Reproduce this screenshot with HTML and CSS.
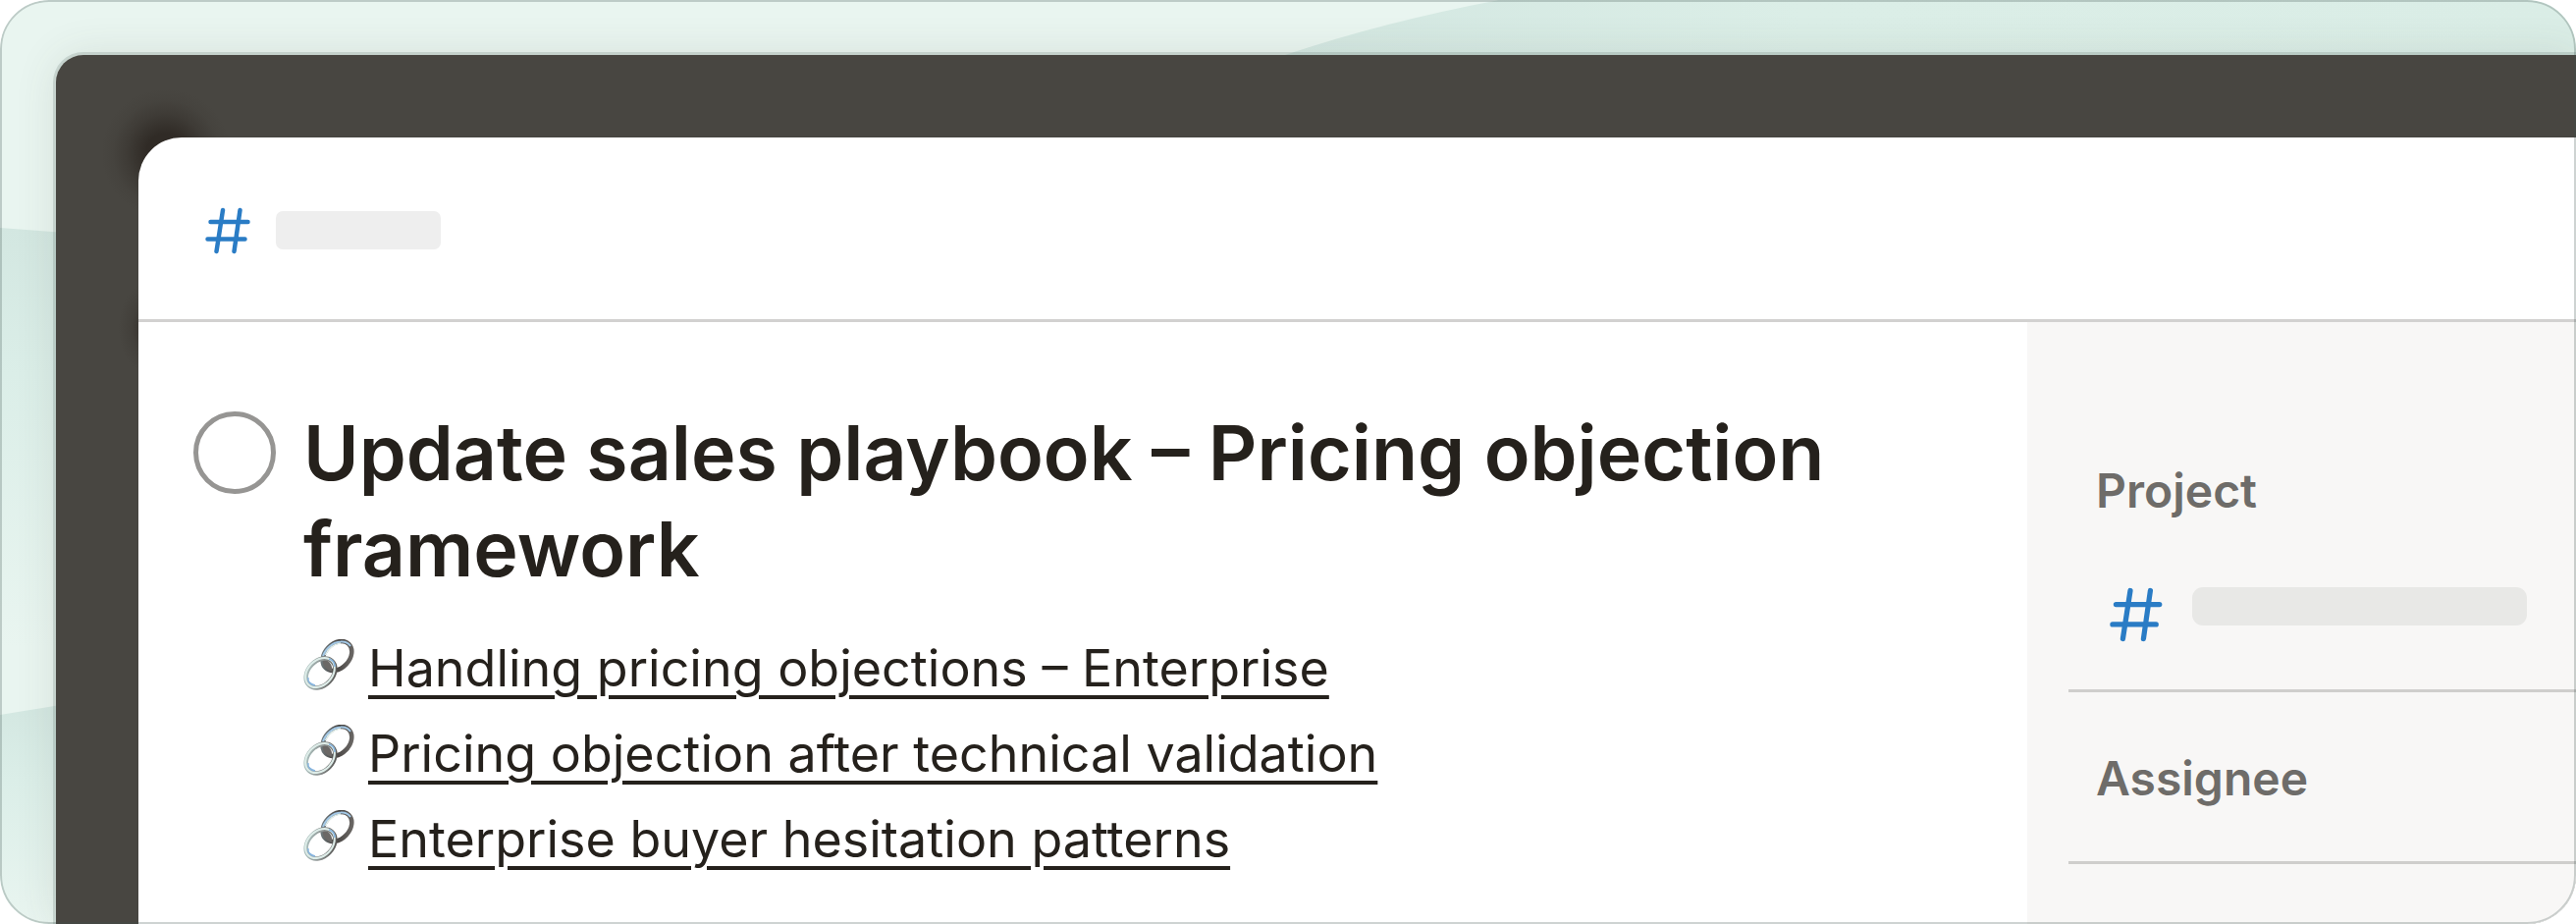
FILE: index.html
```html
<!DOCTYPE html>
<html lang="en">
<head>
<meta charset="utf-8">
<meta name="viewport" content="width=device-width, initial-scale=1">
<title>Update sales playbook – Pricing objection framework</title>
<link rel="stylesheet" href="styles.css">
</head>
<body>
<svg width="0" height="0" class="sprite" aria-hidden="true">
  <defs>
    <linearGradient id="metal" x1="0" y1="0" x2="1" y2="1">
      <stop offset="0" stop-color="#b4ccca"/>
      <stop offset=".5" stop-color="#8f9594"/>
      <stop offset="1" stop-color="#4a4846"/>
    </linearGradient>
    <linearGradient id="steel" x1="0" y1="0" x2="1" y2="1">
      <stop offset="0" stop-color="#7c8a8f"/>
      <stop offset=".5" stop-color="#454240"/>
      <stop offset="1" stop-color="#75726f"/>
    </linearGradient>
    <symbol id="hash" viewBox="0 0 48 48">
      <path d="M18 3 11.500 45M35.500 3 29.500 45M5.500 15H43.500M2.500 32.500H40.500" fill="none" stroke="#2a7cc5" stroke-width="4.500" stroke-linecap="round"/>
    </symbol>
    <symbol id="chain" viewBox="0 0 52 52">
      <g fill="none">
        <ellipse cx="34.500" cy="17" rx="17" ry="12.500" transform="rotate(-46 34.500 17)" stroke="url(#steel)" stroke-width="4.500"/>
        <path d="M20 17C23 9 30 3 38 2.500C43 2 46 4 48 7" stroke="#a3c8e6" stroke-width="2"/>
        <path d="M22.500 16C25.500 9 31.500 5 38 4" stroke="#e3f0ec" stroke-width="1.500"/>
        <path d="M20 20C19 27 23 31 29 33C30 27 27 21 20 20Z" fill="#6b6866"/>
        <ellipse cx="17.500" cy="34.500" rx="17" ry="12.500" transform="rotate(-46 17.500 34.500)" stroke="url(#metal)" stroke-width="4.500"/>
        <ellipse cx="17" cy="34" rx="17" ry="12.500" transform="rotate(-46 17 34)" stroke="#deede9" stroke-width="2"/>
        <path d="M5 39C4 43 7 46 12 47" stroke="#86b4df" stroke-width="1.500"/>
        <path d="M26 20C30 21 32 24 32 28" stroke="#86b4df" stroke-width="1.500"/>
      </g>
    </symbol>
  </defs>
</svg>
<div class="stage">
  <svg class="backdrop" viewBox="0 0 2624 941" preserveAspectRatio="none" aria-hidden="true">
    <defs>
      <linearGradient id="band" x1="0" y1="0" x2="0" y2="1">
        <stop offset="0" stop-color="#d3e7e1"/>
        <stop offset=".35" stop-color="#dbeee8"/>
        <stop offset="1" stop-color="#e9f5f0"/>
      </linearGradient>
      <linearGradient id="sweep" x1="0" y1="0" x2="1" y2="0">
        <stop offset="0" stop-color="#d3e7e1"/>
        <stop offset=".4" stop-color="#dbeee7"/>
        <stop offset="1" stop-color="#daede6"/>
      </linearGradient>
    </defs>
    <rect width="2624" height="941" fill="#e9f5f0"/>
    <path d="M0 232 80 238V660H0Z" fill="url(#band)"/>
    <path d="M0 728 80 715V941H0Z" fill="url(#band)"/>
    <path d="M1527 0Q1410 22 1309 56V80H2624V0Z" fill="url(#sweep)"/>
  </svg>
  <div class="frame">
    <article class="card">
      <header class="card-header">
        <svg class="hash" aria-hidden="true"><use href="#hash"/></svg>
        <span class="placeholder"></span>
      </header>
      <div class="card-body">
        <main class="task">
          <input class="task-check" type="checkbox" id="done" aria-labelledby="task-title">
          <div class="task-content">
            <h1 class="task-title" id="task-title">Update sales playbook – Pricing objection framework</h1>
            <ul class="links">
              <li class="link-row"><svg class="chain" aria-hidden="true"><use href="#chain"/></svg><a href="#handling">Handling pricing objections – Enterprise</a></li>
              <li class="link-row"><svg class="chain" aria-hidden="true"><use href="#chain"/></svg><a href="#validation">Pricing objection after technical validation</a></li>
              <li class="link-row"><svg class="chain" aria-hidden="true"><use href="#chain"/></svg><a href="#hesitation">Enterprise buyer hesitation patterns</a></li>
            </ul>
          </div>
        </main>
        <aside class="sidebar">
          <section class="field field-project">
            <h2 class="field-label">Project</h2>
            <div class="field-value">
              <svg class="hash hash-large" aria-hidden="true"><use href="#hash"/></svg>
              <span class="placeholder placeholder-wide"></span>
            </div>
          </section>
          <section class="field">
            <h2 class="field-label">Assignee</h2>
          </section>
        </aside>
      </div>
    </article>
  </div>
</div>
</body>
</html>
```
FILE: styles.css
```css
* {
  box-sizing: border-box;
}

body {
  margin: 0;
  background: #fff;
  color: #25211c;
  font-family: Inter, "Liberation Sans", sans-serif;
  font-optical-sizing: none;
}

.sprite {
  position: absolute;
}

.stage {
  position: relative;
  display: flex;
  min-height: 100vh;
  padding: 56px 0 0 57px;
  border-radius: 50px;
  overflow: hidden;
}

/* hairline drawn above the content that bleeds off the edges */
.stage::after {
  content: "";
  position: absolute;
  inset: 0;
  border: 2px solid rgba(60, 80, 75, 0.25);
  border-radius: 50px;
  pointer-events: none;
}

.backdrop {
  position: absolute;
  inset: 0;
  width: 100%;
  height: 100%;
}

.frame {
  position: relative;
  display: flex;
  flex: 1;
  padding: 84px 0 0 84px;
  border-top-left-radius: 28px;
  background:
    radial-gradient(circle at 112px 100px, #302b26 0, #302b26 20px, rgba(48, 43, 38, 0.4) 40px, rgba(48, 43, 38, 0.1) 54px, rgba(48, 43, 38, 0) 66px),
    radial-gradient(ellipse 26px 44px at 90px 278px, rgba(53, 49, 44, 0.9) 0, rgba(53, 49, 44, 0.3) 50%, rgba(53, 49, 44, 0) 100%),
    #484641;
  box-shadow: 0 0 0 3px rgba(90, 110, 105, 0.2), 0 0 44px rgba(70, 70, 60, 0.12);
}

.card {
  display: flex;
  flex: 1;
  flex-direction: column;
  border-top-left-radius: 44px;
  background: #fff;
  overflow: hidden;
}

.card-header {
  display: flex;
  align-items: center;
  gap: 24px;
  height: 188px;
  padding: 4px 0 0 68px;
  border-bottom: 3px solid #d2d1d0;
}

.hash {
  width: 48px;
  height: 48px;
}

.hash-large {
  width: 56px;
  height: 56px;
}

.placeholder {
  width: 168px;
  height: 39px;
  border-radius: 7px;
  background: #eeeeee;
}

.placeholder-wide {
  width: 341px;
  border-radius: 11px;
  background: #e8e8e6;
}

.card-body {
  display: grid;
  flex: 1;
  grid-template-columns: minmax(0, 1fr) 559px;
}

.task {
  display: flex;
  align-items: flex-start;
  gap: 28px;
  padding: 84px 56px 0;
}

.task-check {
  flex: none;
  width: 84px;
  height: 84px;
  margin: 7px 0 0;
  border: 5px solid #969593;
  border-radius: 50%;
  appearance: none;
}

.task-check:checked {
  background: #969593;
}

.task-title {
  max-width: 1660px;
  margin: 0;
  font-size: 77px;
  font-weight: 600;
  line-height: 98px;
}

.links {
  margin: 29px 0 0;
  padding: 0;
  list-style: none;
}

.link-row {
  display: flex;
  align-items: center;
  gap: 14px;
  font-size: 52px;
  line-height: 87px;
}

.link-row a {
  color: inherit;
  text-decoration: underline;
  text-decoration-thickness: 4px;
  text-underline-offset: 9px;
}

.chain {
  width: 52px;
  height: 52px;
  margin-bottom: 8px;
}

.sidebar {
  padding: 144px 0 0 42px;
  background: #f8f7f6;
}

.field {
  padding: 0 28px 56px;
  border-bottom: 3px solid #cfcecc;
}

.field + .field {
  padding-top: 60px;
}

.field-label {
  margin: 0;
  color: #6e6c69;
  font-size: 48px;
  font-weight: 600;
  line-height: 56px;
}

.field-project {
  padding-bottom: 48px;
}

.field-value {
  display: flex;
  gap: 28px;
  padding: 70px 0 0 14px;
}
```
